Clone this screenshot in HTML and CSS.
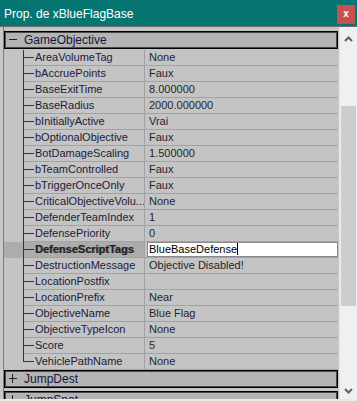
FILE: index.html
```html
<!DOCTYPE html>
<html lang="fr">

<head>
  <meta charset="UTF-8">
  <title>Prop. de xBlueFlagBase</title>
  <link rel="stylesheet" href="styles.css">
</head>

<body>
  <div class="window">
    <div class="titlebar">
      <span class="title">Prop. de xBlueFlagBase</span>
      <span class="close">x</span>
    </div>
    <div class="client">
      <div class="panel">
        <div class="group open"><span class="toggle"></span>GameObjective</div>
        <div class="rows">
          <div class="row"><div class="name">AreaVolumeTag</div><div class="value">None</div></div>
          <div class="row"><div class="name">bAccruePoints</div><div class="value">Faux</div></div>
          <div class="row"><div class="name">BaseExitTime</div><div class="value">8.000000</div></div>
          <div class="row"><div class="name">BaseRadius</div><div class="value">2000.000000</div></div>
          <div class="row"><div class="name">bInitiallyActive</div><div class="value">Vrai</div></div>
          <div class="row"><div class="name">bOptionalObjective</div><div class="value">Faux</div></div>
          <div class="row"><div class="name">BotDamageScaling</div><div class="value">1.500000</div></div>
          <div class="row"><div class="name">bTeamControlled</div><div class="value">Faux</div></div>
          <div class="row"><div class="name">bTriggerOnceOnly</div><div class="value">Faux</div></div>
          <div class="row"><div class="name">CriticalObjectiveVolu...</div><div class="value">None</div></div>
          <div class="row"><div class="name">DefenderTeamIndex</div><div class="value">1</div></div>
          <div class="row"><div class="name">DefensePriority</div><div class="value">0</div></div>
          <div class="row selected">
            <div class="name">DefenseScriptTags</div>
            <div class="value"><div class="edit">BlueBaseDefense<span class="caret"></span></div></div>
          </div>
          <div class="row"><div class="name">DestructionMessage</div><div class="value">Objective Disabled!</div></div>
          <div class="row"><div class="name">LocationPostfix</div><div class="value"></div></div>
          <div class="row"><div class="name">LocationPrefix</div><div class="value">Near</div></div>
          <div class="row"><div class="name">ObjectiveName</div><div class="value">Blue Flag</div></div>
          <div class="row"><div class="name">ObjectiveTypeIcon</div><div class="value">None</div></div>
          <div class="row"><div class="name">Score</div><div class="value">5</div></div>
          <div class="row last"><div class="name">VehiclePathName</div><div class="value">None</div></div>
        </div>
        <div class="group"><span class="toggle"></span>JumpDest</div>
        <div class="group"><span class="toggle"></span>JumpSpot</div>
      </div>
      <div class="scrollbar">
        <svg class="arrow" width="17" height="17" viewBox="0 0 17 17">
          <path d="M5 11 L8.5 7.5 L12 11" fill="none" stroke="#606060" stroke-width="2"/>
        </svg>
        <div class="track"><div class="thumb"></div></div>
        <svg class="arrow" width="17" height="17" viewBox="0 0 17 17">
          <path d="M5 7 L8.5 10.5 L12 7" fill="none" stroke="#606060" stroke-width="2"/>
        </svg>
      </div>
    </div>
  </div>
</body>

</html>
```

FILE: styles.css
```css
body {
  margin: 0;
  font-family: "Liberation Sans", Arial, sans-serif;
  background: #c8c8c8;
}

.window {
  width: 357px;
  height: 401px;
  overflow: hidden;
  background: #c8c8c8;
}

.titlebar {
  height: 26px;
  background: #077673;
  display: flex;
  align-items: center;
  justify-content: space-between;
  padding: 2px 2px 0 4px;
  box-sizing: border-box;
}

.title {
  color: #fff;
  font-size: 12px;
}

.close {
  width: 18px;
  height: 19px;
  background: #c75050;
  color: #fff;
  font-size: 10px;
  font-weight: bold;
  text-align: center;
  line-height: 18px;
}

.client {
  display: flex;
  height: 372px;
  border-top: 1px solid #6e6e6e;
  padding-left: 3px;
  border-bottom: 2px solid #e8e8e8;
}

.panel {
  flex: 1;
  border-left: 1px solid #7c7c7c;
  padding-top: 4px;
  overflow: hidden;
  background: #c4c4c4;
}

/* category headers */
.group {
  height: 18px;
  box-sizing: border-box;
  border: 1px solid #000;
  box-shadow: inset 0 0 0 1px #4a4a4a;
  background: #b4b4b4;
  color: #14143a;
  font-size: 12px;
  line-height: 16px;
  padding-left: 19px;
  position: relative;
  margin-bottom: 3px;
}

.group.open {
  margin-bottom: 1px;
}

.toggle {
  position: absolute;
  left: 4px;
  top: 7px;
  width: 8px;
  height: 1px;
  background: #222;
}

.group:not(.open) .toggle::after {
  content: "";
  position: absolute;
  left: 3px;
  top: -4px;
  width: 1px;
  height: 9px;
  background: #222;
}

/* property rows */
.row {
  display: flex;
  height: 16px;
  font-size: 11px;
  line-height: 15px;
  color: #1a1a3c;
}

.name {
  position: relative;
  width: 140px;
  flex: none;
  box-sizing: border-box;
  padding-left: 31px;
  white-space: nowrap;
  overflow: hidden;
  background: linear-gradient(#a2a2a2, #a2a2a2) 19px 100% / 100% 1px no-repeat;
}

.name::before {
  content: "";
  position: absolute;
  left: 19px;
  top: 0;
  bottom: 0;
  width: 1px;
  background: #333;
}

.name::after {
  content: "";
  position: absolute;
  left: 19px;
  top: 7px;
  width: 11px;
  height: 1px;
  background: #333;
}

.row.last .name::before {
  bottom: 8px;
}

.value {
  flex: 1;
  border-left: 1px solid #a2a2a2;
  border-bottom: 1px solid #a2a2a2;
  padding-left: 4px;
  color: #262626;
  white-space: nowrap;
}

.row.selected .name {
  background-color: #acacac;
  font-weight: bold;
  color: #202020;
  text-shadow: 1px 0 0 #777;
}

.row.selected .value {
  padding-left: 2px;
}

.edit {
  height: 15px;
  box-sizing: border-box;
  background: #fff;
  border: 1px solid #8a8a8a;
  color: #000;
  line-height: 13px;
  padding-left: 1px;
  margin-right: 0;
}

.caret {
  display: inline-block;
  width: 1px;
  height: 12px;
  background: #000;
  vertical-align: -2px;
}

/* scrollbar */
.scrollbar {
  width: 17px;
  flex: none;
  margin-left: 1px;
  border-left: 1px solid #e4e4e4;
  background: #f0f0f0;
  display: flex;
  flex-direction: column;
  padding-top: 3px;
}

.arrow {
  display: block;
}

.track {
  flex: 1;
  padding: 59px 1px 0 1px;
}

.thumb {
  height: 200px;
  background: #cdcdcd;
}
```
